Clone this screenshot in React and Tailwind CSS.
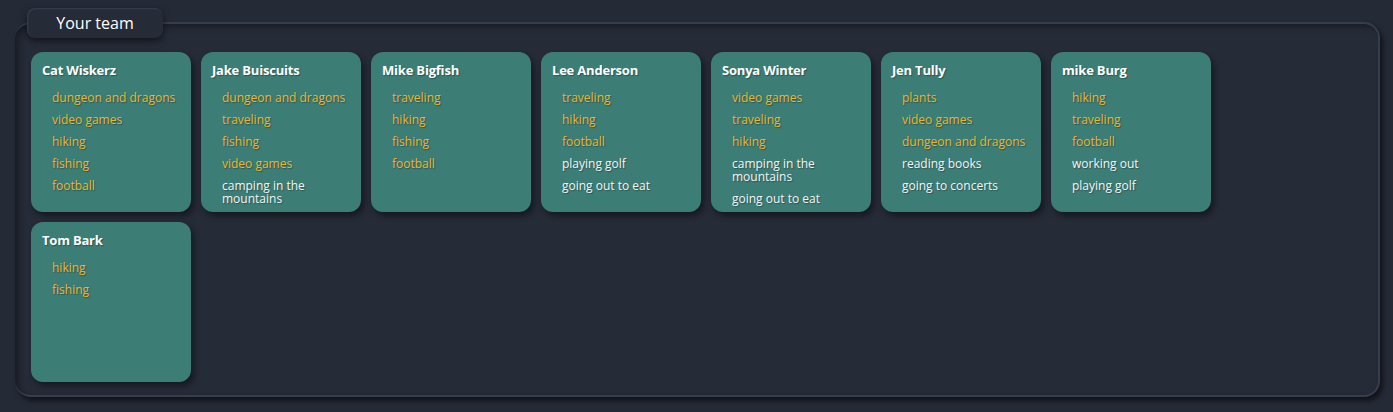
const team = [
  {
    name: "Cat Wiskerz",
    likes: [
      ["dungeon and dragons", true],
      ["video games", true],
      ["hiking", true],
      ["fishing", true],
      ["football", true],
    ],
  },
  {
    name: "Jake Buiscuits",
    likes: [
      ["dungeon and dragons", true],
      ["traveling", true],
      ["fishing", true],
      ["video games", true],
      ["camping in the mountains", false],
    ],
  },
  {
    name: "Mike Bigfish",
    likes: [
      ["traveling", true],
      ["hiking", true],
      ["fishing", true],
      ["football", true],
    ],
  },
  {
    name: "Lee Anderson",
    likes: [
      ["traveling", true],
      ["hiking", true],
      ["football", true],
      ["playing golf", false],
      ["going out to eat", false],
    ],
  },
  {
    name: "Sonya Winter",
    likes: [
      ["video games", true],
      ["traveling", true],
      ["hiking", true],
      ["camping in the mountains", false],
      ["going out to eat", false],
    ],
  },
  {
    name: "Jen Tully",
    likes: [
      ["plants", true],
      ["video games", true],
      ["dungeon and dragons", true],
      ["reading books", false],
      ["going to concerts", false],
    ],
  },
  {
    name: "mike Burg",
    likes: [
      ["hiking", true],
      ["traveling", true],
      ["football", true],
      ["working out", false],
      ["playing golf", false],
    ],
  },
  {
    name: "Tom Bark",
    likes: [
      ["hiking", true],
      ["fishing", true],
    ],
  },
];

function MemberCard({ member }) {
  return (
    <div className="w-[160px] h-[160px] rounded-[12px] bg-[#3c7d75] px-[11px] pt-[10px] shadow-[3px_4px_6px_rgba(0,0,0,0.45)]">
      <h3 className="text-[13px] leading-[16px] font-bold text-white tracking-[-0.2px] [text-shadow:1px_1px_1px_rgba(0,0,0,0.3)]">
        {member.name}
      </h3>
      <ul className="mt-[13px] pl-[10px] flex flex-col gap-[9px]">
        {member.likes.map(([like, shared]) => (
          <li
            key={like}
            className={`${
              shared ? "text-[#f0b52a]" : "text-[#f4f5f7]"
            } text-[12px] leading-[13px] [text-shadow:1px_1px_1px_rgba(0,0,0,0.3)]`}
          >
            {like}
          </li>
        ))}
      </ul>
    </div>
  );
}

export default function App() {
  return (
    <div
      className="min-h-[412px] bg-[#252a37] pt-[8px] pl-[15px] pr-[13px]"
      style={{ fontFamily: '"Open Sans", "Noto Sans", sans-serif' }}
    >
      <div className="relative z-10 ml-[12px] w-[136px] h-[30px] rounded-[8px] bg-[#262b38] flex items-center justify-center text-[16px] text-white shadow-[0_3px_7px_rgba(0,0,0,0.55),inset_1px_1px_2px_rgba(90,100,120,0.35)]">
        Your team
      </div>
      <div className="-mt-[16px] h-[375px] rounded-[16px] bg-[#262b38] pl-[16px] pr-[14px] pt-[28px] border-t-2 border-r-2 border-b-2 border-[#363d4e] shadow-[inset_4px_3px_6px_rgba(0,0,0,0.35),3px_4px_5px_rgba(0,0,0,0.55)]">
        <div className="flex flex-wrap gap-[10px]">
          {team.map((member) => (
            <MemberCard key={member.name} member={member} />
          ))}
        </div>
      </div>
    </div>
  );
}
